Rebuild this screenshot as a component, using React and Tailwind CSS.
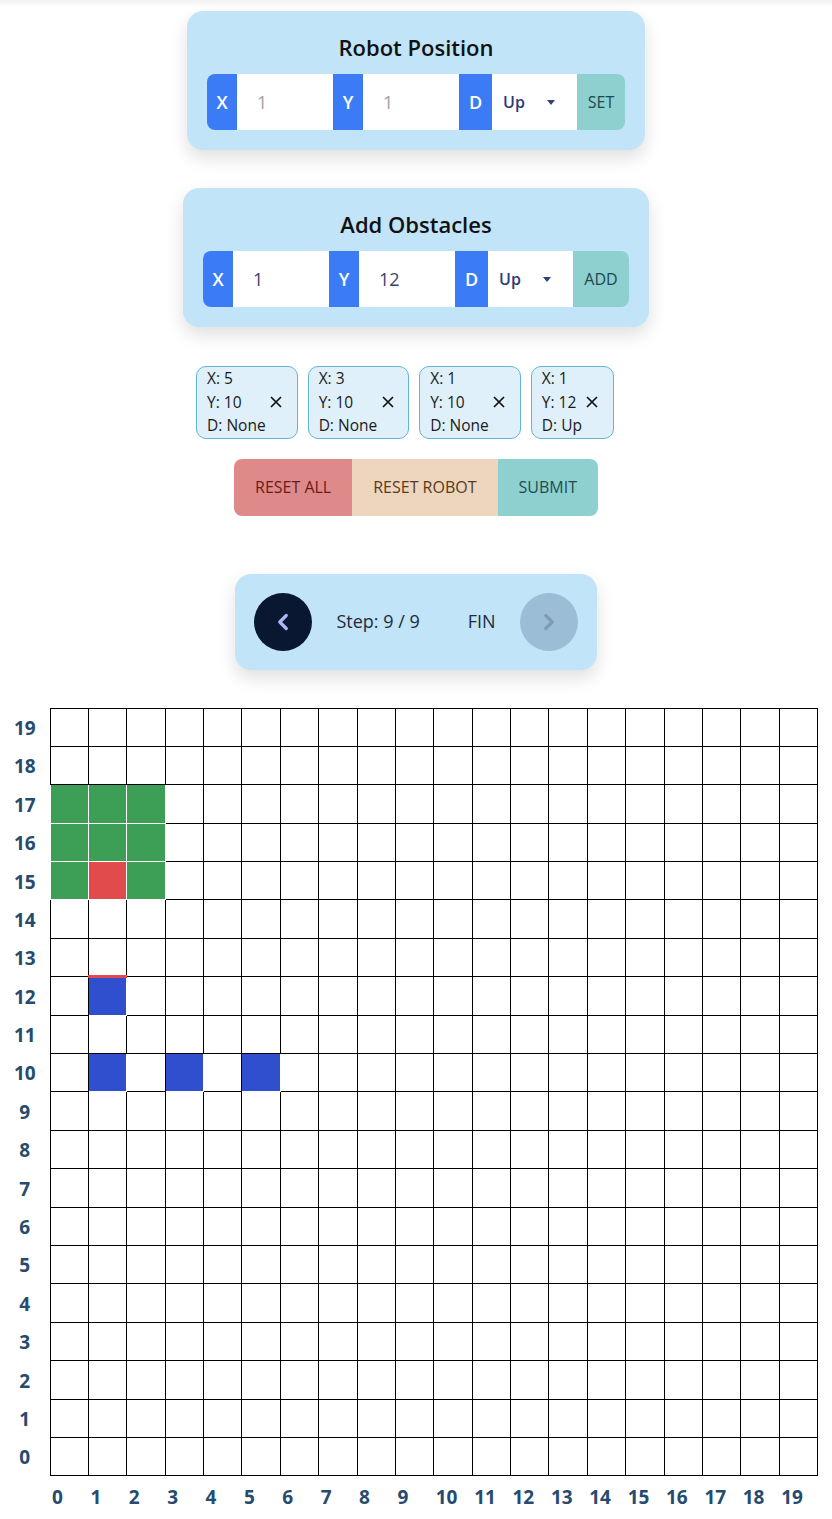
import { ChevronLeft, ChevronRight } from "lucide-react";

const FONT = { fontFamily: '"Open Sans", "Noto Sans", sans-serif' };

const obstacles = [
  { x: 5, y: 10, d: "None" },
  { x: 3, y: 10, d: "None" },
  { x: 1, y: 10, d: "None" },
  { x: 1, y: 12, d: "Up" },
];

function cellClass(c, r) {
  if (c === 1 && r === 15) return "bg-[#e24b4b] border border-white";
  if (c <= 2 && r >= 15 && r <= 17) return "bg-[#3c9f55] border border-white";
  if (c === 1 && r === 12) return "bg-[#2f4fcf] border border-white border-t-[3px] border-t-[#e24b4b]";
  if (r === 10 && (c === 1 || c === 3 || c === 5)) return "bg-[#2f4fcf] border border-white";
  return "bg-white border border-black";
}

function Caret() {
  return (
    <svg width="8" height="5" viewBox="0 0 8 5" className="ml-auto">
      <path d="M0 0h8L4 5z" fill="#34417f" />
    </svg>
  );
}

function Field({ label, width = "w-[30px]" }) {
  return (
    <span className={`flex ${width} items-center justify-center bg-[#3b7cf6] text-[18px] font-semibold text-white`}>
      {label}
    </span>
  );
}

function InputRow({ x, y, placeholder, button, buttonWidth }) {
  return (
    <div className="flex h-[56px] overflow-hidden rounded-lg">
      <Field label="X" />
      <input
        readOnly
        placeholder={placeholder ? "1" : ""}
        defaultValue={placeholder ? "" : x}
        className="w-[96px] bg-white pl-[20px] text-[18px] text-[#3b3f6e] outline-none placeholder:text-[#a3a3a3]"
      />
      <Field label="Y" />
      <input
        readOnly
        placeholder={placeholder ? "1" : ""}
        defaultValue={placeholder ? "" : y}
        className="w-[96px] bg-white pl-[20px] text-[18px] text-[#3b3f6e] outline-none placeholder:text-[#a3a3a3]"
      />
      <Field label="D" width="w-[33px]" />
      <div className="flex w-[85px] items-center bg-white pl-[11px] pr-[22px] text-[16px] font-semibold text-[#2f3a78]">
        Up
        <Caret />
      </div>
      <button type="button" className={`${buttonWidth} bg-[#8ecfd0] text-[16px] text-[#1d4a4c]`}>
        {button}
      </button>
    </div>
  );
}

function Panel({ title, children }) {
  return (
    <div className="rounded-2xl bg-[#c1e4f8] px-5 pb-5 pt-5 shadow-[0_8px_18px_rgba(0,0,0,0.13)]">
      <h2 className="mb-[10px] h-[33px] text-center text-[22px] font-semibold leading-[33px] text-[#111]">{title}</h2>
      {children}
    </div>
  );
}

function CloseIcon() {
  return (
    <svg width="12" height="12" viewBox="0 0 12 12">
      <path d="M1 1l10 10M11 1L1 11" stroke="#111" strokeWidth="1.7" />
    </svg>
  );
}

export default function App() {
  const rows = [...Array(20)].map((_, i) => 19 - i);
  const cols = [...Array(20)].map((_, i) => i);

  return (
    <div style={FONT} className="min-h-[1519px] bg-[linear-gradient(#f1f1f1,#fff_7px)] pt-[11px]">
      <div className="flex flex-col items-center">
        <Panel title="Robot Position">
          <InputRow placeholder button="SET" buttonWidth="w-[48px]" />
        </Panel>

        <div className="mt-[38px]">
          <Panel title="Add Obstacles">
            <InputRow x="1" y="12" button="ADD" buttonWidth="w-[56px]" />
          </Panel>
        </div>

        <div className="mt-[39px] flex gap-[10px] pr-[22px]">
          {obstacles.map((o, i) => (
            <div
              key={i}
              className="flex items-center rounded-[10px] border border-[#62b6d2] bg-[#dff0fb] px-[10px] text-[15.5px] leading-[23.5px] text-[#1a1a1a]"
            >
              <div>
                <p>X: {o.x}</p>
                <p>Y: {o.y}</p>
                <p>D: {o.d}</p>
              </div>
              <span className="flex w-[21px] justify-center">
                <CloseIcon />
              </span>
            </div>
          ))}
        </div>

        <div className="mt-[20px] flex h-[57px] overflow-hidden rounded-lg text-[16px]">
          <button type="button" className="bg-[#df8a8a] px-[21px] text-[#6b1a1a]">RESET ALL</button>
          <button type="button" className="bg-[#edd5be] px-[21px] text-[#5a3a1a]">RESET ROBOT</button>
          <button type="button" className="bg-[#8ecfd0] px-[21px] text-[#1d4d4f]">SUBMIT</button>
        </div>

        <div className="mt-[58px] flex items-center rounded-2xl bg-[#c1e4f8] p-[19px] shadow-[0_8px_18px_rgba(0,0,0,0.13)]">
          <button type="button" className="flex h-[58px] w-[58px] items-center justify-center rounded-full bg-[#0a1730]">
            <ChevronLeft size={26} strokeWidth={3} color="#aab8f5" />
          </button>
          <span className="ml-6 text-[18px] text-[#1e2a3a]">Step: 9 / 9</span>
          <span className="ml-12 text-[18px] text-[#1e2a3a]">FIN</span>
          <button type="button" className="ml-6 flex h-[58px] w-[58px] items-center justify-center rounded-full bg-[#9bbdd5]">
            <ChevronRight size={26} strokeWidth={3} color="#7d9db6" />
          </button>
        </div>
      </div>

      <table className="mt-[38px] w-[818px] table-fixed border-collapse">
        <colgroup>
          <col className="w-[50px]" />
          {cols.map((c) => (
            <col key={c} />
          ))}
        </colgroup>
        <tbody>
          {rows.map((r) => (
            <tr key={r} className="h-[38.4px]">
              <td className="p-0 pt-[2px] text-center text-[19px] font-bold text-[#264b6e]">{r}</td>
              {cols.map((c) => (
                <td key={c} className={`p-0 ${cellClass(c, r)}`} />
              ))}
            </tr>
          ))}
          <tr className="h-[43px]">
            <td className="p-0" />
            {cols.map((c) => (
              <td key={c} className="p-0 pl-[2px] text-left text-[19px] font-bold text-[#264b6e]">
                {c}
              </td>
            ))}
          </tr>
        </tbody>
      </table>
    </div>
  );
}
